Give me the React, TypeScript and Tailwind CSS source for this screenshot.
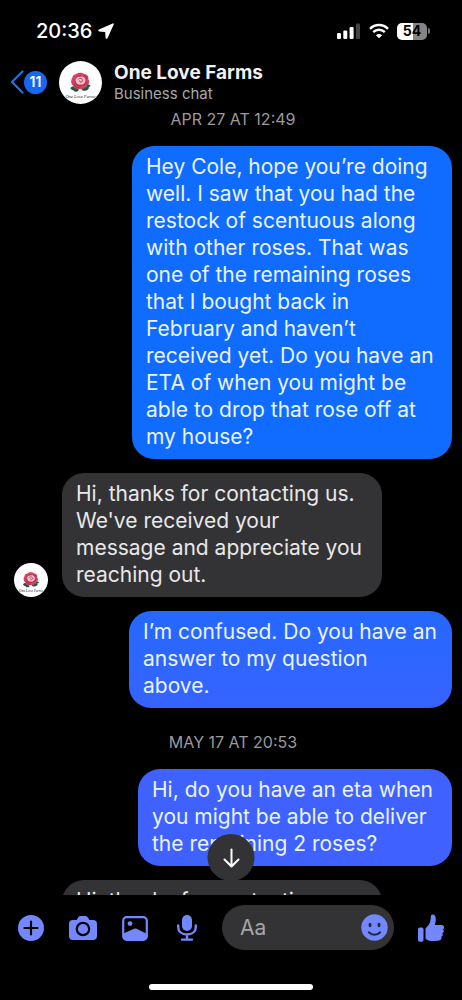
import clsx from "clsx";

type Message = {
  id: number;
  from: "me" | "farm";
  text: string;
  style: string;
  showAvatar?: boolean;
};

type Group = {
  date: string;
  messages: Message[];
};

const groups: Group[] = [
  {
    date: "APR 27 AT 12:49",
    messages: [
      {
        id: 1,
        from: "me",
        style: "w-80 bg-[#106bff]",
        text: "Hey Cole, hope you’re doing well. I saw that you had the restock of scentuous along with other roses. That was one of the remaining roses that I bought back in February and haven’t received yet. Do you have an ETA of when you might be able to drop that rose off at my house?",
      },
      {
        id: 2,
        from: "farm",
        style: "w-80",
        showAvatar: true,
        text: "Hi, thanks for contacting us. We've received your message and appreciate you reaching out.",
      },
      {
        id: 3,
        from: "me",
        style: "w-[323px] bg-linear-to-b from-[#2468ff] to-[#3663ff]",
        text: "I’m confused. Do you have an answer to my question above.",
      },
    ],
  },
  {
    date: "MAY 17 AT 20:53",
    messages: [
      {
        id: 4,
        from: "me",
        style: "w-[314px] bg-[#3f61ff]",
        text: "Hi, do you have an eta when you might be able to deliver the remaining 2 roses?",
      },
      {
        id: 5,
        from: "farm",
        style: "w-80",
        text: "Hi, thanks for contacting us. We've received your message and appreciate you reaching out.",
      },
    ],
  },
];

function RoseLogo({ className }: { className?: string }) {
  return (
    <svg viewBox="0 0 42 42" className={clsx("shrink-0 rounded-full bg-white", className)} role="img" aria-label="One Love Farms">
      <path d="M11 26.500c2-2.500 6-2.500 8 1-2 2-6 2-8-1zM22 28c1-3 4.500-4 7.500-2-1 3-4.500 4.200-7.500 2zM26 23.500c2-1 4-1 5 1-2 1.500-4 1-5-1zM14.500 29c1-2 3.500-2 5-1-1 2-3.500 3-5 1z" fill="#24573f" />
      <path d="M13 16.500c0-2 2-3.500 3.500-3.500 2-2 6.500-2 8.500 0 2.500 0 4.500 2.500 3.500 4.500 2 2 1 5.500-1.500 6.500-1 3-4.500 4-6.500 3-3 1-6.500 0-6.500-3-2-1-3-5-1-7.500z" fill="#cf4562" />
      <path d="M16.500 17.500c1-3.500 8-3.500 9 0 1 3-1 5.500-4.500 5.500s-5.500-2.500-4.500-5.500z" fill="#f1bcc7" />
      <path d="M19 18c1-2 4-1 4 1s-3 2-3 0M16 20c0 3 3 5 6 4M26.500 20c0 2-1 3-3 4M17 16c1-1 3-2 5-1M14.500 22c1 3 3 4.500 6.500 4.500M24 14.500c2 0 3 1 3 3" fill="none" stroke="#9c2340" strokeWidth="0.8" />
      <text x="21" y="36" textAnchor="middle" fontSize="4.400" fontStyle="italic" fontFamily="Liberation Serif, serif" fill="#222">
        One Love Farms
      </text>
    </svg>
  );
}

function StatusBar() {
  return (
    <div className="flex h-[60px] items-center justify-between pt-0.5 pr-8 pl-9 text-white">
      <div className="flex items-center gap-1.5 text-[20px] leading-6 font-medium">
        <span>20:36</span>
        <svg width="16" height="16" viewBox="0 0 16 16" fill="currentColor">
          <path d="M14.700.400.900 6.600c-1 .5-.8 1.800.3 1.900l5.600.400c.3 0 .4.200.4.400l.4 5.600c.1 1.100 1.500 1.300 1.900.3L15.700 1.400c.3-.7-.4-1.300-1-1z" />
        </svg>
      </div>
      <div className="flex items-center gap-2">
        <svg width="24" height="16" viewBox="0 0 24 16" fill="currentColor">
          <rect x="0" y="10" width="4" height="6" rx="1.200" />
          <rect x="6.300" y="7.500" width="4" height="8.500" rx="1.200" />
          <rect x="12.600" y="4" width="4" height="12" rx="1.200" />
          <rect x="19" y="0.500" width="4" height="15.500" rx="1.200" fill="#444" />
        </svg>
        <svg width="20" height="16" viewBox="0 0 20 16" fill="none" stroke="currentColor" strokeWidth="2.500">
          <path d="M1 5.800C6 .8 14 .8 19 5.800" />
          <path d="M4.200 9.200c3.300-3.300 8.300-3.300 11.600 0" />
          <path d="M10 15.300 6.900 12.200c1.800-1.700 4.400-1.700 6.200 0z" fill="currentColor" stroke="none" />
        </svg>
        <div className="flex items-center gap-px">
          <div className="flex h-[17px] w-[30px] items-center justify-center rounded-[5px] bg-linear-to-r from-white from-54% to-[#858585] to-54% text-[14px] leading-4 font-bold text-black">
            54
          </div>
          <div className="h-1.5 w-0.5 rounded-r-full bg-[#777]" />
        </div>
      </div>
    </div>
  );
}

function ChatHeader() {
  return (
    <header className="flex h-11 items-center pl-2.5">
      <button type="button" aria-label="Back, 11 unread" className="flex items-center">
        <svg width="14" height="24" viewBox="0 0 14 24" fill="none" stroke="#2071e8" strokeWidth="2.200" strokeLinecap="round" strokeLinejoin="round">
          <path d="M12.500 1.500 2 12l10.500 10.500" />
        </svg>
        <span className="flex size-[23px] items-center justify-center rounded-full bg-[#1768ee] text-[14px] leading-4 font-semibold text-white">
          11
        </span>
      </button>
      <RoseLogo className="ml-3 size-[43px]" />
      <div className="ml-3 flex flex-col">
        <h1 className="text-[19px] leading-[22px] font-bold text-[#f0f0f0]">One Love Farms</h1>
        <p className="text-[15px] leading-[19px] text-[#a8a8a8]">Business chat</p>
      </div>
    </header>
  );
}

function Bubble({ message }: { message: Message }) {
  const mine = message.from === "me";
  return (
    <div className={clsx("flex items-end", mine ? "justify-end" : "justify-start")}>
      {!mine && (
        <div className="mr-3.5 w-[34px] shrink-0">
          {message.showAvatar && <RoseLogo className="size-[34px]" />}
        </div>
      )}
      <p
        className={clsx(
          "rounded-[22px] px-3.5 pt-[7px] pb-[9px] text-[21px] leading-[27px]",
          mine ? "text-[#e8f4ff]" : "bg-[#333335] text-[#e8e8ea]",
          message.style
        )}
      >
        {message.text}
      </p>
    </div>
  );
}

function Composer() {
  return (
    <form className="flex items-center gap-6 px-[18px] pt-2.5 text-[#7388ff]">
      <button type="button" aria-label="More">
        <svg width="26" height="26" viewBox="0 0 26 26">
          <circle cx="13" cy="13" r="13" fill="currentColor" />
          <path d="M13 6.500v13M6.500 13h13" stroke="black" strokeWidth="2.200" strokeLinecap="round" />
        </svg>
      </button>
      <button type="button" aria-label="Camera">
        <svg width="30" height="26" viewBox="0 0 30 26">
          <path d="M5 5h3.500l2-3Q11.300 1 12.600 1h4.800q1.300 0 2.100 1l2 3H25q4 0 4 4v12q0 4-4 4H5q-4 0-4-4V9q0-4 4-4z" fill="currentColor" />
          <circle cx="15" cy="14" r="6.200" fill="none" stroke="black" strokeWidth="2.200" />
        </svg>
      </button>
      <button type="button" aria-label="Photos">
        <svg width="26" height="26" viewBox="0 0 26 26">
          <rect x="1.200" y="2.200" width="23.600" height="22.600" rx="3.500" fill="none" stroke="currentColor" strokeWidth="2.200" />
          <circle cx="8" cy="8.600" r="2.400" fill="currentColor" />
          <path d="M1.500 18.500 12 13.700q1.300-.6 2.600 0l10 5V22q0 3-3 3H4.500q-3 0-3-3z" fill="currentColor" />
        </svg>
      </button>
      <button type="button" aria-label="Voice message">
        <svg width="26" height="28" viewBox="0 0 26 28" fill="none" stroke="currentColor" strokeWidth="2.400" strokeLinecap="round">
          <rect x="10" y="1" width="10" height="16" rx="5" fill="currentColor" stroke="none" />
          <path d="M6.200 11.500v1.500c0 4.500 3.600 7.500 8.800 7.500s8.800-3 8.800-7.500v-1.500M15 20.500v5M10 25.600h10" />
        </svg>
      </button>
      <div className="flex h-[45px] min-w-0 flex-1 items-center rounded-full bg-[#333335] pr-1.5 pl-[18px]">
        <input
          type="text"
          aria-label="Message"
          placeholder="Aa"
          className="w-full min-w-0 flex-1 bg-transparent text-[21px] leading-[27px] text-white outline-none placeholder:text-[#a5a5a8]"
        />
        <button type="button" aria-label="Emoji">
          <svg width="27" height="27" viewBox="0 0 27 27">
            <circle cx="13.500" cy="13.500" r="13.200" fill="currentColor" />
            <ellipse cx="9" cy="11" rx="1.500" ry="2.300" fill="#26283a" />
            <ellipse cx="18" cy="11" rx="1.500" ry="2.300" fill="#26283a" />
            <path d="M7.800 18.200c3.200 3.300 8.200 3.300 11.400 0" fill="none" stroke="#26283a" strokeWidth="2" strokeLinecap="round" />
          </svg>
        </button>
      </div>
      <button type="button" aria-label="Like">
        <svg width="26" height="28" viewBox="0 0 26 28" fill="currentColor">
          <rect x="0" y="13.500" width="5.500" height="14.300" rx="1.800" />
          <path d="M7.500 15.500q0-1.500 1.200-2.500c2.400-2 3.500-4 3.800-7.200l.3-3.300Q13 .5 14.600.5c2 0 3.200 1.700 3.200 4.200 0 2.400-.4 4.300-1 6.300h6.700c3 0 3.300 3.300 1.400 4.200 1.400 1.200 1 3.300-.5 3.900.9 1.400.3 3-1 3.500.6 1.500-.3 3.600-2.400 4-1.300.3-3 .4-5.200.4-3.200 0-5.800-.5-7.300-1.500-.7-.4-1-1-1-1.800z" />
        </svg>
      </button>
    </form>
  );
}

export default function App() {
  return (
    <div className="flex h-screen flex-col overflow-hidden bg-black font-['Inter','Liberation_Sans',sans-serif]">
      <StatusBar />
      <ChatHeader />

      <main className="relative min-h-0 flex-1 overflow-hidden pt-1 pr-2.5 pl-3.5">
        {groups.map((group) => (
          <section key={group.date} className="mb-[23px]">
            <h2 className="mb-4 text-center text-[16px] leading-[22px] text-[#9a9a9c]">{group.date}</h2>
            <div className="flex flex-col gap-3.5">
              {group.messages.map((message) => (
                <Bubble key={message.id} message={message} />
              ))}
            </div>
          </section>
        ))}
        <button
          type="button"
          aria-label="Scroll to latest"
          className="absolute bottom-3.5 left-1/2 flex size-[47px] -translate-x-1/2 items-center justify-center rounded-full bg-[#333335]"
        >
          <svg width="18" height="20" viewBox="0 0 18 20" fill="none" stroke="white" strokeWidth="2" strokeLinecap="round" strokeLinejoin="round">
            <path d="M9 1.500v17M2 11.500l7 7 7-7" />
          </svg>
        </button>
      </main>

      <footer className="flex h-[105px] flex-col justify-between pb-2.5">
        <Composer />
        <div className="mx-auto h-1.5 w-[164px] rounded-full bg-white" />
      </footer>
    </div>
  );
}
